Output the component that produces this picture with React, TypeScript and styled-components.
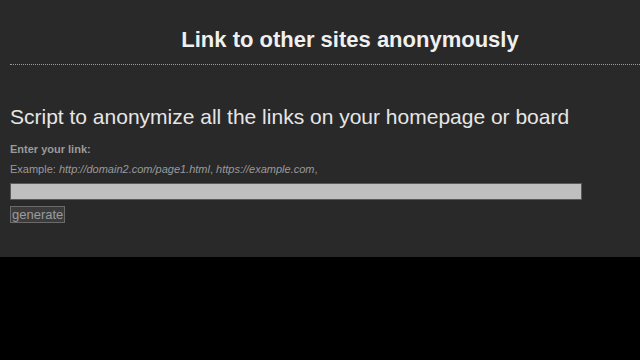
import React from "react";
import styled, { createGlobalStyle } from "styled-components";

const Global = createGlobalStyle`
  html, body { margin: 0; padding: 0; background: #000; }
  body { font-family: "Liberation Sans", Arial, sans-serif; }
`;

const Page = styled.div`
  background: #292929;
  height: 257px;
  padding: 0 0 0 10px;
  box-sizing: border-box;
  overflow: hidden;
`;

const Header = styled.header`
  border-bottom: 1px dotted #9a9a9a;
  padding: 27px 0 11px 50px;
`;

const Title = styled.h1`
  margin: 0;
  font-size: 22px;
  font-weight: bold;
  color: #f0f0f0;
  text-align: center;
  line-height: 26px;
`;

const Subtitle = styled.h2`
  margin: 38px 0 0 0;
  font-size: 21px;
  font-weight: normal;
  color: #e6e6e6;
  line-height: 28px;
`;

const Label = styled.div`
  margin-top: 12px;
  font-size: 11px;
  font-weight: bold;
  color: #9a9a9a;
  line-height: 13px;
`;

const Example = styled.div`
  margin-top: 7px;
  font-size: 11px;
  color: #9a9a9a;
  line-height: 13px;
  em { font-style: italic; }
`;

const Input = styled.input`
  display: block;
  margin-top: 7px;
  width: 572px;
  height: 17px;
  box-sizing: border-box;
  background: #bfbfbf;
  border: 1px solid #5a5a5a;
  padding: 0;
  outline: none;
`;

const Button = styled.button`
  display: block;
  margin-top: 6px;
  padding: 0 1px;
  height: 17px;
  font-family: "Liberation Sans", Arial, sans-serif;
  font-size: 13px;
  line-height: 15px;
  color: #9c9c9c;
  background: #3b3b3b;
  border: 1px solid #6a6a6a;
  border-radius: 0;
`;

export default function App() {
  return (
    <>
      <Global />
      <Page>
        <Header>
          <Title>Link to other sites anonymously</Title>
        </Header>
        <Subtitle>Script to anonymize all the links on your homepage or board</Subtitle>
        <Label>Enter your link:</Label>
        <Example>
          Example: <em>http://domain2.com/page1.html</em>, <em>https://example.com</em>,
        </Example>
        <Input type="text" />
        <Button>generate</Button>
      </Page>
    </>
  );
}
